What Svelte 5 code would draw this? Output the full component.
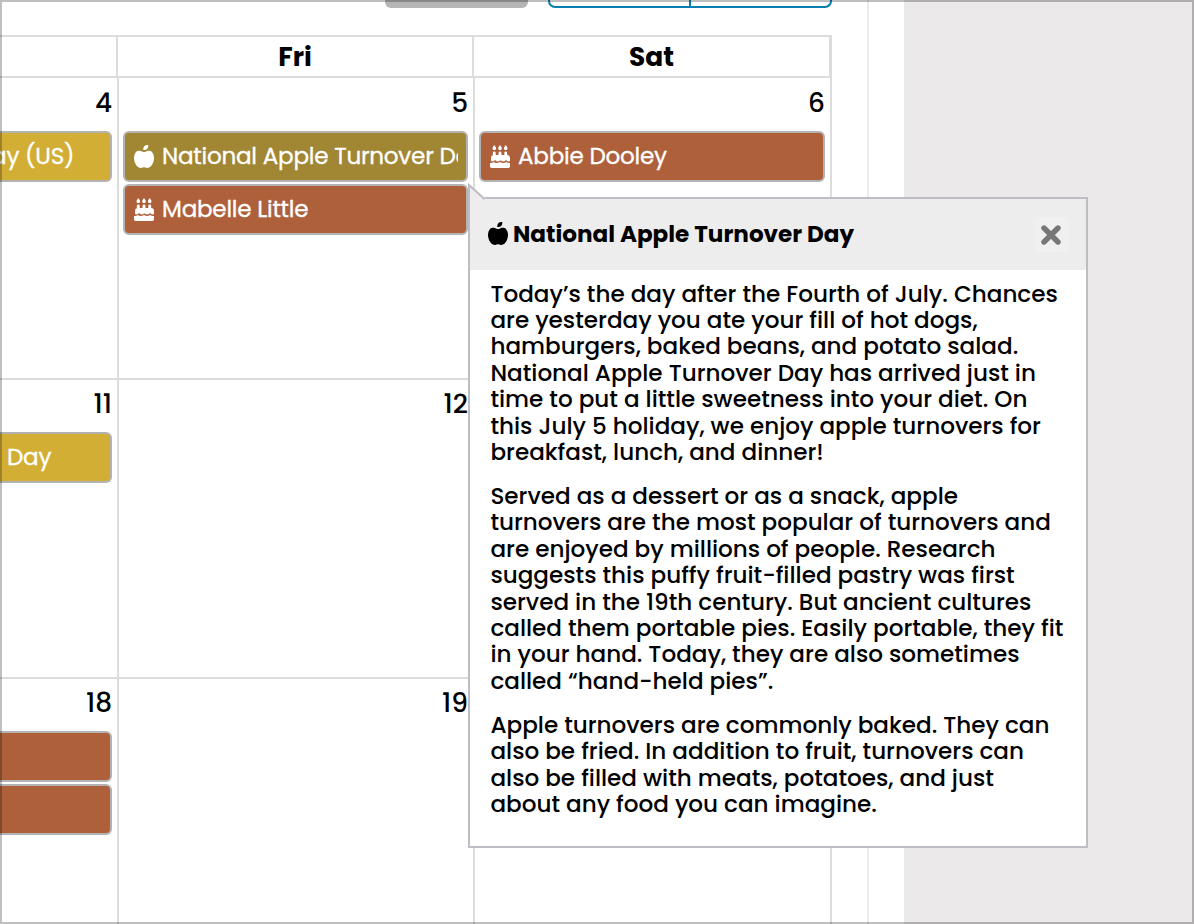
<script>
  const weeks = [
    {
      height: 300,
      pad: 53,
      days: [
        { n: '4', events: [{ kind: 'gold', text: 'Day (US)', shift: -25 }] },
        {
          n: '5',
          events: [
            { kind: 'olive', icon: 'apple', text: 'National Apple Turnover Day' },
            { kind: 'rust', icon: 'cake', text: 'Mabelle Little' }
          ]
        },
        { n: '6', events: [{ kind: 'rust', icon: 'cake', text: 'Abbie Dooley' }] }
      ]
    },
    {
      height: 297,
      pad: 52,
      days: [
        { n: '11', events: [{ kind: 'gold', text: 'Day', shift: 7 }] },
        { n: '12', events: [] },
        { n: '', events: [] }
      ]
    },
    {
      height: 245,
      pad: 52,
      days: [
        { n: '18', events: [{ kind: 'rust', text: '' }, { kind: 'rust', text: '' }] },
        { n: '19', events: [] },
        { n: '', events: [] }
      ]
    }
  ];

  const paragraphs = [
    [
      'Today’s the day after the Fourth of July. Chances',
      'are yesterday you ate your fill of hot dogs,',
      'hamburgers, baked beans, and potato salad.',
      'National Apple Turnover Day has arrived just in',
      'time to put a little sweetness into your diet. On',
      'this July 5 holiday, we enjoy apple turnovers for',
      'breakfast, lunch, and dinner!'
    ],
    [
      'Served as a dessert or as a snack, apple',
      'turnovers are the most popular of turnovers and',
      'are enjoyed by millions of people. Research',
      'suggests this puffy fruit-filled pastry was first',
      'served in the 19th century. But ancient cultures',
      'called them portable pies. Easily portable, they fit',
      'in your hand. Today, they are also sometimes',
      'called “hand-held pies”.'
    ],
    [
      'Apple turnovers are commonly baked. They can',
      'also be fried. In addition to fruit, turnovers can',
      'also be filled with meats, potatoes, and just',
      'about any food you can imagine.'
    ]
  ];
</script>

{#snippet glyph(name)}
  {#if name === 'apple'}
    <svg class="glyph" viewBox="0 0 448 512" aria-hidden="true">
      <path d="M350.85 129c25.97 4.67 47.27 18.67 63.92 42 14.65 20.67 24.64 46.67 29.96 78 4.67 28.67 4.32 57.33-1 86-7.99 47.33-23.97 87-47.94 119-28.64 38.67-64.59 58-107.87 58-10.66 0-22.3-3.33-34.96-10-8.66-5.33-18.31-8-28.97-8s-20.3 2.67-28.97 8c-12.66 6.67-24.3 10-34.96 10-43.28 0-79.23-19.33-107.87-58-23.97-32-39.95-71.67-47.94-119-5.32-28.67-5.67-57.33-1-86 5.32-31.33 15.31-57.33 29.96-78 16.65-23.33 37.95-37.33 63.92-42 15.98-2.67 37.95-.33 65.92 7 23.97 6.67 44.28 14.67 60.93 24 16.65-9.33 36.96-17.33 60.93-24 27.98-7.33 49.96-9.67 65.94-7zm-54.94-41c-9.32 8.67-21.65 15-36.96 19-10.66 3.33-22.3 5-34.96 5l-14.98-1c-1.33-9.33-1.33-20 0-32 2.67-24 10.32-42.33 22.97-55 9.32-8.67 21.65-15 36.96-19 10.66-3.33 22.3-5 34.96-5l14.98 1 1 15c0 12.67-1.67 24.33-4.99 35-3.99 15.33-10.31 27.67-18.98 37z" />
    </svg>
  {:else}
    <svg class="glyph" viewBox="0 0 448 512" aria-hidden="true">
      <path d="M96 0L62 47c-14 30-4 65 34 65s48-35 34-65zM224 0l-34 47c-14 30-4 65 34 65s48-35 34-65zM352 0l-34 47c-14 30-4 65 34 65s48-35 34-65z" />
      <path d="M64 224v-48a32 32 0 0 1 64 0v48h64v-48a32 32 0 0 1 64 0v48h64v-48a32 32 0 0 1 64 0v48a64 64 0 0 1 64 64v71c-28 18-54 9-76-13-8-8-16-8-24 0-34 30-68 30-104 0-5-4-11-4-16 0-36 30-70 30-104 0-8-8-16-8-24 0-22 22-48 31-76 13v-71a64 64 0 0 1 64-64z" />
      <path d="M0 394c30 12 60 5 84-14 40 28 92 28 140 0 48 28 100 28 140 0 24 19 54 26 84 14v86a32 32 0 0 1-32 32H32a32 32 0 0 1-32-32z" />
    </svg>
  {/if}
{/snippet}

<div class="screen">
  <main class="page">
    <div class="content">
      <div class="toolbar">
        <div class="today"></div>
        <div class="views"><div></div><div></div></div>
      </div>
      <div class="calendar">
        <div class="head">
          <div class="th first"></div>
          <div class="th mid">Fri</div>
          <div class="th last">Sat</div>
        </div>
        {#each weeks as week}
          <div class="week" style:height="{week.height}px">
            {#each week.days as day}
              <div class="day">
                <div class="num" style:height="{week.pad}px">{day.n}</div>
                {#each day.events as ev}
                  <div class="event {ev.kind}">
                    <div class="clip">
                      {#if ev.icon}{@render glyph(ev.icon)}{/if}
                      <span class="label" style:margin-left="{ev.shift ?? 8}px">{ev.text}</span>
                    </div>
                  </div>
                {/each}
              </div>
            {/each}
          </div>
        {/each}
      </div>
    </div>
  </main>

  <section class="popover">
    <svg class="tip" width="18" height="18" viewBox="0 0 18 18" aria-hidden="true">
      <path d="M0 0L18 16V18H0z" fill="#ededed" />
      <path d="M1 18V2L16.5 16" fill="none" stroke="#bdbdc3" stroke-width="2" />
    </svg>
    <header>
      {@render glyph('apple')}
      <h2>National Apple Turnover Day</h2>
      <button aria-label="Close">
        <svg width="20" height="20" viewBox="0 0 20 20"><path d="M3 3L17 17M17 3L3 17" stroke="#777" stroke-width="5.4" stroke-linecap="round" /></svg>
      </button>
    </header>
    <div class="text">
      {#each paragraphs as lines}
        <p>
          {#each lines as line}<span class="line">{line}</span>{/each}
        </p>
      {/each}
    </div>
  </section>
  <div class="frame"></div>
</div>

<style>
  :global(body) { margin: 0; }
  .screen {
    position: relative;
    width: 1194px;
    height: 924px;
    overflow: hidden;
    background: #ebe9ea;
    color: #000;
    font-family: Poppins, Inter, "Open Sans", sans-serif;
    font-weight: 500;
    box-sizing: border-box;
  }
  .screen * { box-sizing: border-box; }
  .page { width: 904px; height: 924px; background: #fff; }
  .content { width: 869px; height: 924px; border-right: 2px solid #ebebeb; }
  .toolbar { display: flex; height: 35px; padding-left: 385px; gap: 20px; }
  .today { width: 143px; height: 8px; background: #b5b5b5; border-radius: 0 0 6px 6px; }
  .views {
    display: flex;
    width: 284px;
    height: 8px;
    border: 2px solid #087fb0;
    border-top: 0;
    border-radius: 0 0 7px 7px;
  }
  .views div { flex: 1; }
  .views div:first-child { border-right: 2px solid #087fb0; }
  .calendar { width: 832px; }
  .head {
    display: flex;
    height: 43px;
    border: solid #dcdcdc;
    border-width: 2px 3px 2px 0;
  }
  .th {
    display: flex;
    justify-content: center;
    border-right: 2px solid #dcdcdc;
    font-size: 26.4px;
    line-height: 39px;
    font-weight: 700;
  }
  .th.first { width: 118px; }
  .th.mid { width: 356px; }
  .th.last { flex: 1; border: 0; }
  .week {
    display: flex;
    box-sizing: content-box !important;
    border-bottom: 2px solid #dcdcdc;
  }
  .week:last-child { border-bottom: 0; }
  .day { width: 357px; padding: 0 5px 0 4px; border-right: 2px solid #dcdcdc; }
  .day:first-child { width: 119px; padding-left: 0; }
  .day:nth-child(2) { width: 356px; }
  .num { text-align: right; font-size: 26.4px; line-height: 48px; }
  .head + .week .num { line-height: 50px; }
  .event {
    height: 51px;
    margin-bottom: 2px;
    padding: 0 8px 0 9px;
    border: 2px solid #b3b3b3;
    border-radius: 6px;
    color: #fff;
    font-size: 23.1px;
    line-height: 47px;
    font-weight: 400;
    letter-spacing: -.25px;
    -webkit-text-stroke: .3px #fff;
  }
  .day:first-child .event { border-left: 0; border-radius: 0 6px 6px 0; padding-left: 0; }
  .gold { background: #d2ae35; }
  .olive { background: #a18733; }
  .rust { background: #ae603b; }
  .clip { display: flex; align-items: center; height: 47px; overflow: hidden; }
  .label { flex: none; white-space: pre; }
  .glyph { flex: none; width: 20px; height: 23px; fill: currentColor; }
  .clip .glyph { margin-top: -1px; }
  .popover {
    position: absolute;
    left: 468px;
    top: 197px;
    width: 620px;
    height: 651px;
    border: 2px solid #bdbdc3;
    background: #fff;
  }
  .tip { position: absolute; left: -2px; top: -16px; }
  header {
    display: flex;
    align-items: center;
    height: 71px;
    padding: 0 17px 0 18px;
    background: #ededed;
  }
  header .glyph { margin-top: -2px; }
  h2 { flex: 1; margin: -2px 0 0 5px; font-size: 23.1px; line-height: 30px; font-weight: 700; }
  button {
    display: grid;
    place-items: center;
    width: 35px;
    height: 35px;
    padding: 0 2px 0 0;
    border: 0;
    border-radius: 6px;
    background: #f0f0f0;
  }
  .text { padding: 10.5px 0 0 20.4px; font-size: 23.1px; line-height: 26.4px; }
  p { margin: 0 0 17.6px; }
  .line { display: block; white-space: pre; }
  .frame { position: absolute; inset: 0; border: 2px solid rgba(0, 0, 0, .25); pointer-events: none; }
</style>
